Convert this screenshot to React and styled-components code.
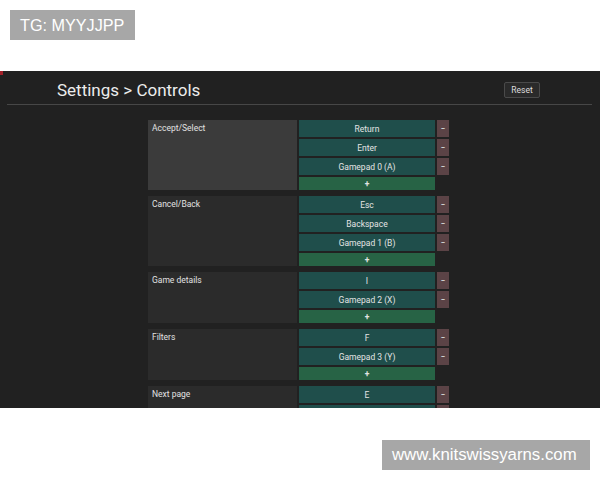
import React from 'react';
import styled, { createGlobalStyle } from 'styled-components';

const bindings = [
  { action: 'Accept/Select', keys: ['Return', 'Enter', 'Gamepad 0 (A)'], active: true },
  { action: 'Cancel/Back', keys: ['Esc', 'Backspace', 'Gamepad 1 (B)'] },
  { action: 'Game details', keys: ['I', 'Gamepad 2 (X)'] },
  { action: 'Filters', keys: ['F', 'Gamepad 3 (Y)'] },
  { action: 'Next page', keys: ['E', 'Gamepad 4 (RB)'] },
];

function App() {
  return (
    <>
      <GlobalStyle />
      <Top>
        <Tag>TG: MYYJJPP</Tag>
      </Top>
      <Panel>
        <Header>
          <Title>Settings &gt; Controls</Title>
          <ResetButton>Reset</ResetButton>
        </Header>
        <Divider />
        <List>
          {bindings.map((group) => (
            <Group key={group.action}>
              <Label $active={group.active}>{group.action}</Label>
              <Keys>
                {group.keys.map((key) => (
                  <KeyRow key={key}>
                    <KeyButton>{key}</KeyButton>
                    <RemoveButton>−</RemoveButton>
                  </KeyRow>
                ))}
                <KeyRow>
                  <AddButton>+</AddButton>
                </KeyRow>
              </Keys>
            </Group>
          ))}
        </List>
      </Panel>
      <Bottom>
        <Tag $large>www.knitswissyarns.com</Tag>
      </Bottom>
    </>
  );
}

export default App;

const GlobalStyle = createGlobalStyle`
  html, body {
    margin: 0;
    padding: 0;
    background: #ffffff;
    font-family: Roboto, "Liberation Sans", sans-serif;
  }
  * {
    box-sizing: border-box;
  }
`;

const Top = styled.div`
  height: 71px;
  padding: 10px 0 0 10px;
`;

const Bottom = styled.div`
  height: 72px;
  padding: 32px 10px 0 0;
  display: flex;
  justify-content: flex-end;
  align-items: flex-start;
`;

const Tag = styled.div`
  display: inline-flex;
  align-items: center;
  height: 30px;
  padding: 0 10px;
  background: #a7a7a7;
  color: #ffffff;
  font-family: "Liberation Sans", Arial, sans-serif;
  font-size: ${(p) => (p.$large ? '16.8px' : '16.2px')};
  width: ${(p) => (p.$large ? '208px' : '125px')};
`;

const Panel = styled.div`
  position: relative;
  height: 337px;
  overflow: hidden;
  background: #212121;
  &::before {
    content: '';
    position: absolute;
    left: 0;
    top: 0;
    width: 3px;
    height: 4px;
    background: #a3212a;
  }
`;

const Header = styled.div`
  height: 33px;
  display: flex;
  align-items: center;
  justify-content: space-between;
  padding: 5px 60px 0 57px;
`;

const Title = styled.h1`
  margin: 0;
  font-size: 17px;
  font-weight: 400;
  color: #ececec;
`;

const ResetButton = styled.button`
  width: 36px;
  height: 16px;
  padding: 0;
  background: #2a2a2a;
  border: 1px solid #4a4a4a;
  border-radius: 2px;
  color: #dedede;
  font-family: Roboto, sans-serif;
  font-size: 8.5px;
`;

const Divider = styled.div`
  height: 1px;
  margin: 0 8px 0 7px;
  background: #474747;
`;

const List = styled.div`
  display: flex;
  flex-direction: column;
  gap: 6px;
  padding: 15px 0 0 148px;
`;

const Group = styled.div`
  display: flex;
  gap: 2px;
`;

const Label = styled.div`
  width: 149px;
  padding: 3px 4px;
  background: ${(p) => (p.$active ? '#3b3b3b' : '#2b2b2b')};
  color: #e2e2e2;
  font-size: 8.5px;
`;

const Keys = styled.div`
  display: flex;
  flex-direction: column;
  gap: 2px;
`;

const KeyRow = styled.div`
  display: flex;
  gap: 2px;
`;

const KeyButton = styled.div`
  width: 136px;
  height: 17px;
  display: flex;
  align-items: center;
  justify-content: center;
  background: #1f4e4b;
  color: #e4e4e4;
  font-size: 8.5px;
`;

const RemoveButton = styled.div`
  width: 12px;
  height: 17px;
  display: flex;
  align-items: center;
  justify-content: center;
  background: #5b4346;
  color: #d8d8d8;
  font-size: 8px;
  font-weight: 700;
`;

const AddButton = styled.div`
  width: 136px;
  height: 13px;
  display: flex;
  align-items: center;
  justify-content: center;
  background: #276345;
  color: #e4e4e4;
  font-size: 8.5px;
  font-weight: 700;
`;
